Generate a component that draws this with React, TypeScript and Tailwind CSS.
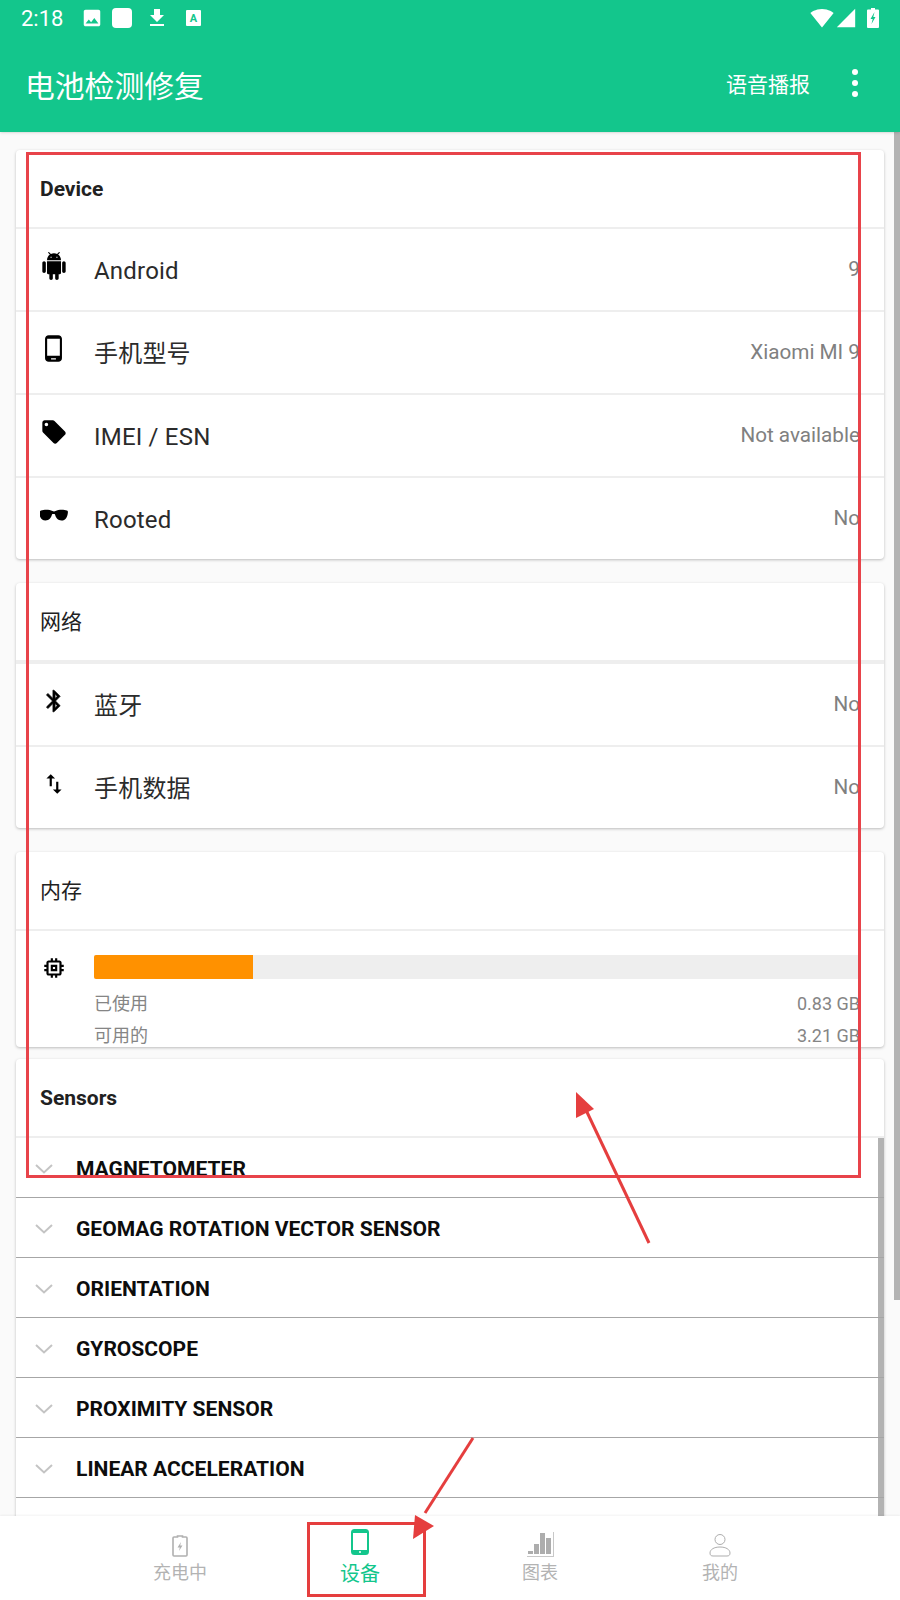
import React from "react";
import { MdImage, MdLocalOffer, MdMemory, MdPhoneAndroid, MdSignalCellular4Bar, MdSignalWifi4Bar, MdSwapVert, MdFileDownload } from "react-icons/md";

const font = { fontFamily: '"Roboto","Noto Sans CJK SC",sans-serif' };

function Droid() {
  return (
    <svg width="28" height="28" viewBox="0 0 24 24" fill="black">
      <path d="M6 18c0 .55.45 1 1 1h1v3.500c0 .830.670 1.500 1.500 1.500s1.500-.67 1.500-1.500V19h2v3.500c0 .830.670 1.500 1.500 1.500s1.500-.67 1.500-1.500V19h1c.55 0 1-.45 1-1V8H6v10zM3.500 8C2.670 8 2 8.670 2 9.500v7c0 .830.670 1.500 1.500 1.500S5 17.330 5 16.500v-7C5 8.670 4.330 8 3.500 8zm17 0c-.83 0-1.500.67-1.500 1.500v7c0 .830.670 1.500 1.500 1.500s1.500-.67 1.500-1.500v-7c0-.83-.67-1.500-1.500-1.500zm-4.970-5.840l1.300-1.300c.2-.2.2-.51 0-.71-.2-.2-.51-.2-.71 0l-1.480 1.480C13.850 1.230 12.950 1 12 1c-.96 0-1.860.23-2.660.63L7.850.15c-.2-.2-.51-.2-.71 0-.2.2-.2.51 0 .71l1.310 1.310C6.970 3.260 6 5.010 6 7h12c0-1.990-.97-3.750-2.470-4.840zM10 5H9V4h1v1zm5 0h-1V4h1v1z" />
    </svg>
  );
}

function Shades() {
  return (
    <svg className="mt-[3px]" width="28" height="14" viewBox="0 0 28 14" fill="black">
      <path d="M1 1.500C4 .4 9.500.3 12.500 2c1 .5 2 .5 3 0 3-1.700 8.500-1.600 11.500-.5.700.300 1 .900.900 1.700-.300 4.800-2.400 8.300-6.400 8.300-3.500 0-5.800-3-6.500-6-.2-.6-2.800-.6-3 0-.7 3-3 6-6.500 6-4 0-6.100-3.500-6.400-8.300C.1 2.400.400 1.800 1 1.500z" />
    </svg>
  );
}

function Bluetooth() {
  return (
    <svg width="26" height="26" viewBox="0 0 24 24" fill="black" stroke="black" strokeWidth="0.6">
      <path d="M17.710 7.710 12 2h-1v7.590L6.410 5 5 6.410 10.590 12 5 17.590 6.410 19 11 14.410V22h1l5.710-5.710-4.300-4.290 4.300-4.290zM13 5.830l1.880 1.880L13 9.590V5.830zm1.880 10.460L13 18.170v-3.760l1.880 1.880z" />
    </svg>
  );
}

function InfoRow({ icon, label, value, last }: { icon: React.ReactNode; label: string; value: string; last?: boolean }) {
  return (
    <div className={`flex items-center pr-6 ${last ? "h-[81px]" : "h-[83px] border-b-2 border-[#eeeeee]"}`}>
      <div className="flex w-[78px] shrink-0 justify-center pb-2 pr-[2px]">{icon}</div>
      <div className="mt-[2px] flex-1 text-[24px] leading-none tracking-[0.2px] text-[#2b2b2b]">{label}</div>
      <div className="text-[20.700px] leading-none text-[#808080]">{value}</div>
    </div>
  );
}

function CardHead({ title, bold, thick }: { title: string; bold?: boolean; thick?: boolean }) {
  return (
    <div className={`flex items-center pl-6 pt-[2px] text-[21px] leading-none text-[#212121] ${bold ? "font-bold" : ""} ${thick ? "h-[81px] border-b-4 border-[#eeeeee]" : "h-[79px] border-b-2 border-[#eeeeee]"}`}>
      {title}
    </div>
  );
}

function Sensor({ name }: { name: string }) {
  return (
    <div className="relative z-[1] flex h-[60px] items-center border-b border-[#a6a6a6]">
      <svg className="ml-[19px] mt-[2px] w-[18px] shrink-0" height="10" viewBox="0 0 18 10" fill="none" stroke="#c4c4c4" strokeWidth="2">
        <path d="M1 1l8 7.500L17 1" />
      </svg>
      <span className="ml-[23px] mt-[3px] text-[21.050px] font-bold leading-none text-[#0d0d0d]">{name}</span>
    </div>
  );
}

function NavItem({ icon, label, active }: { icon: React.ReactNode; label: string; active?: boolean }) {
  return (
    <div className="flex w-[180px] flex-col items-center">
      <div className={`flex h-[30px] items-end ${active ? "pb-[2px]" : ""}`}>{icon}</div>
      <div className={`leading-[28px] ${active ? "mt-[3px] text-[20px] text-[#13c68c]" : "mt-[2px] text-[18px] text-[#b3b3b3]"}`}>{label}</div>
    </div>
  );
}

export default function App() {
  return (
    <div className="relative flex h-[1600px] w-[900px] flex-col overflow-hidden bg-[#fafafa]" style={font}>
      <header className="z-10 h-[132px] shrink-0 bg-[#13c68c] text-white shadow-sm">
        <div className="flex h-9 items-center pl-[21px] pr-[21px]">
          <span className="mt-[1px] w-[61px] text-[22px] leading-none">2:18</span>
          <MdImage size={22} className="-ml-[1px]" />
          <div className="ml-[9px] h-5 w-5 rounded-[4px] bg-white" />
          <MdFileDownload size={24} className="ml-[13px]" />
          <div className="ml-[17px] flex h-[16px] w-[15px] items-center justify-center rounded-[1px] bg-white text-[11px] font-bold leading-none text-[#13c68c]">A</div>
          <div className="flex-1" />
          <MdSignalWifi4Bar size={24} />
          <MdSignalCellular4Bar size={22} className="ml-[1px]" />
          <svg className="ml-[10px]" width="12" height="20" viewBox="0 0 12 20">
            <path fill="white" d="M4 0h4v1.500h3a1 1 0 0 1 1 1V19a1 1 0 0 1-1 1H1a1 1 0 0 1-1-1V2.500a1 1 0 0 1 1-1h3z" />
            <path fill="#13c68c" d="M7.500 4 3.500 11h2.200L4.500 16l4-7H6.300z" />
          </svg>
        </div>
        <div className="flex h-[96px] items-center pb-[2px] pl-[25px] pr-[42px]">
          <div className="mt-[7px] flex-1 text-[29.800px] leading-none">电池检测修复</div>
          <div className="mr-[2px] mt-[4px] text-[21px] leading-none">语音播报</div>
          <div className="ml-[40px] flex flex-col gap-[5px]">
            <div className="h-[6px] w-[6px] rounded-full bg-white" />
            <div className="h-[6px] w-[6px] rounded-full bg-white" />
            <div className="h-[6px] w-[6px] rounded-full bg-white" />
          </div>
        </div>
      </header>

      <main className="relative flex-1 overflow-hidden pl-4 pr-4 pt-[18px]">
        <section className="rounded-[4px] bg-white shadow-[0_1px_3px_rgba(0,0,0,0.25)]">
          <CardHead title="Device" bold />
          <InfoRow icon={<Droid />} label="Android" value="9" />
          <InfoRow icon={<MdPhoneAndroid size={29} className="-ml-[2px]" />} label="手机型号" value="Xiaomi MI 9" />
          <InfoRow icon={<MdLocalOffer size={28} />} label="IMEI / ESN" value="Not available" />
          <InfoRow icon={<Shades />} label="Rooted" value="No" last />
        </section>

        <section className="mt-6 rounded-[4px] bg-white shadow-[0_1px_3px_rgba(0,0,0,0.25)]">
          <CardHead title="网络" thick />
          <InfoRow icon={<Bluetooth />} label="蓝牙" value="No" />
          <InfoRow icon={<MdSwapVert size={26} />} label="手机数据" value="No" last />
        </section>

        <section className="mt-6 h-[195px] rounded-[4px] bg-white shadow-[0_1px_3px_rgba(0,0,0,0.25)]">
          <CardHead title="内存" />
          <div className="flex pr-6 pt-[24px]">
            <div className="flex w-[78px] shrink-0 justify-center pr-[2px]">
              <MdMemory size={26} />
            </div>
            <div className="flex-1 text-[18px] leading-[32px] text-[#858585]">
              <div className="mb-[9px] h-6 overflow-hidden rounded-l-[2px] bg-[#eeeeee]">
                <div className="h-full w-[159px] bg-[#ff9100]" />
              </div>
              <div className="flex justify-between"><span>已使用</span><span>0.83 GB</span></div>
              <div className="flex justify-between"><span>可用的</span><span>3.21 GB</span></div>
            </div>
          </div>
        </section>

        <section className="relative mt-3 rounded-[4px] bg-white shadow-[0_1px_3px_rgba(0,0,0,0.25)]">
          <CardHead title="Sensors" bold />
          {["MAGNETOMETER", "GEOMAG ROTATION VECTOR SENSOR", "ORIENTATION", "GYROSCOPE", "PROXIMITY SENSOR", "LINEAR ACCELERATION", ""].map((n, i) => (
            <Sensor key={i} name={n} />
          ))}
          <div className="absolute right-0 top-[79px] h-[500px] w-[6px] bg-[#b3b3b3]" />
        </section>

        <div className="absolute right-0 top-0 h-[1168px] w-[6px] bg-[#b3b3b3]" />
      </main>

      <nav className="z-10 flex h-[84px] shrink-0 justify-center bg-white pt-[11px] shadow-[0_-1px_2px_rgba(0,0,0,0.05)]">
        <NavItem
          label="充电中"
          icon={
            <svg width="16" height="22" viewBox="0 0 16 22" fill="none">
              <path d="M5.500 2V1h5v1H14a1 1 0 0 1 1 1v17a1 1 0 0 1-1 1H2a1 1 0 0 1-1-1V3a1 1 0 0 1 1-1z" stroke="#b0b0b0" strokeWidth="1.600" />
              <path d="M9 7 5.500 12.500h2.300L7 16l3.500-5.500H8.200z" fill="#b0b0b0" />
            </svg>
          }
        />
        <NavItem
          active
          label="设备"
          icon={
            <svg width="18" height="26" viewBox="0 0 18 26" fill="none">
              <rect x="1" y="1" width="16" height="24" rx="2.500" stroke="#13c68c" strokeWidth="2" />
              <path d="M1 3.500a2.500 2.500 0 0 1 2.500-2.500h11A2.500 2.500 0 0 1 17 3.500V4H1zM1 21h16v1.500a2.500 2.500 0 0 1-2.500 2.500h-11A2.500 2.500 0 0 1 1 22.500z" fill="#13c68c" />
              <circle cx="9" cy="23" r="1" fill="white" />
            </svg>
          }
        />
        <NavItem
          label="图表"
          icon={
            <svg width="27" height="25" viewBox="0 0 27 25" fill="#adadad">
              <rect x="1" y="19" width="5" height="3" />
              <rect x="7" y="12" width="5" height="10" />
              <rect x="13" y="1" width="5" height="21" />
              <rect x="19" y="6" width="5" height="16" />
              <path d="M26 0h1v25H0v-1h26z" fill="#c8c8c8" />
            </svg>
          }
        />
        <NavItem
          label="我的"
          icon={
            <svg width="22" height="24" viewBox="0 0 22 24" fill="none" stroke="#adadad" strokeWidth="1">
              <circle cx="11" cy="6.500" r="5" />
              <path d="M1 20c0-3.500 4-6 10-6s10 2.500 10 6c0 2-1 3-3 3H4c-2 0-3-1-3-3z" />
            </svg>
          }
        />
      </nav>

      <div className="absolute left-[26px] top-[152px] z-20 h-[1026px] w-[835px] border-[3px] border-[#e8434a]" />
      <div className="absolute left-[307px] top-[1522px] z-20 h-[75px] w-[119px] border-[3px] border-[#e53e3e]" />
      <svg className="pointer-events-none absolute left-0 top-0 z-20" width="900" height="1600" viewBox="0 0 900 1600">
        <path d="M649 1243 586 1110" stroke="#e53e3e" strokeWidth="3" />
        <path d="M576 1092 594 1109 576 1118z" fill="#e53e3e" />
        <path d="M473 1438 425 1513" stroke="#e53e3e" strokeWidth="3" />
        <path d="M413 1539 415 1515 434 1526z" fill="#e53e3e" />
      </svg>
    </div>
  );
}
